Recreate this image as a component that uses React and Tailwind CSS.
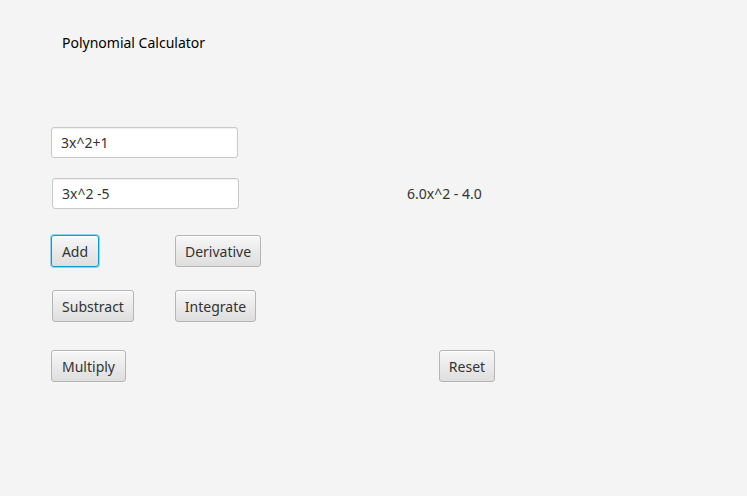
import React from "react";

const font = { fontFamily: '"Segoe UI", "Noto Sans", "Open Sans", sans-serif' };

function FxButton({ children, className = "", focused = false }) {
  return (
    <button
      className={
        "h-[32px] rounded-[3px] text-[14px] text-[#333] flex items-center justify-center bg-gradient-to-b from-[#f7f7f7] to-[#dedede] shadow-[inset_0_1px_0_#ffffff] " +
        (focused
          ? "border border-[#039ed3] ring-1 ring-[#8fd3ee] "
          : "border border-[#b5b5b5] ") +
        className
      }
    >
      {children}
    </button>
  );
}

function FxInput({ value, className = "" }) {
  return (
    <div
      className={
        "h-[31px] w-[187px] bg-white border border-[#c8c8c8] rounded-[3px] shadow-[inset_0_1px_1px_rgba(0,0,0,0.06)] flex items-center pl-[9px] text-[14px] text-[#333] " +
        className
      }
    >
      {value}
    </div>
  );
}

export default function App() {
  return (
    <div className="w-[747px] h-[496px] bg-[#f4f4f4] flex flex-col" style={font}>
      {/* titulo */}
      <div className="pt-[33px] pl-[62px] h-[53px] text-[14px] leading-[20px] text-black">
        Polynomial Calculator
      </div>

      {/* entradas */}
      <FxInput value="3x^2+1" className="mt-[74px] ml-[51px]" />

      <div className="mt-[20px] flex items-center">
        <FxInput value="3x^2 -5" className="ml-[52px]" />
        <span className="ml-[168px] text-[14px] text-[#333]">6.0x^2 - 4.0</span>
      </div>

      {/* botones */}
      <div className="mt-[26px] flex">
        <FxButton focused className="ml-[51px] w-[48px]">Add</FxButton>
        <FxButton className="ml-[76px] w-[86px]">Derivative</FxButton>
      </div>

      <div className="mt-[23px] flex">
        <FxButton className="ml-[52px] w-[82px]">Substract</FxButton>
        <FxButton className="ml-[41px] w-[81px]">Integrate</FxButton>
      </div>

      <div className="mt-[28px] flex">
        <FxButton className="ml-[51px] w-[75px]">Multiply</FxButton>
        <FxButton className="ml-[313px] w-[56px]">Reset</FxButton>
      </div>
    </div>
  );
}
